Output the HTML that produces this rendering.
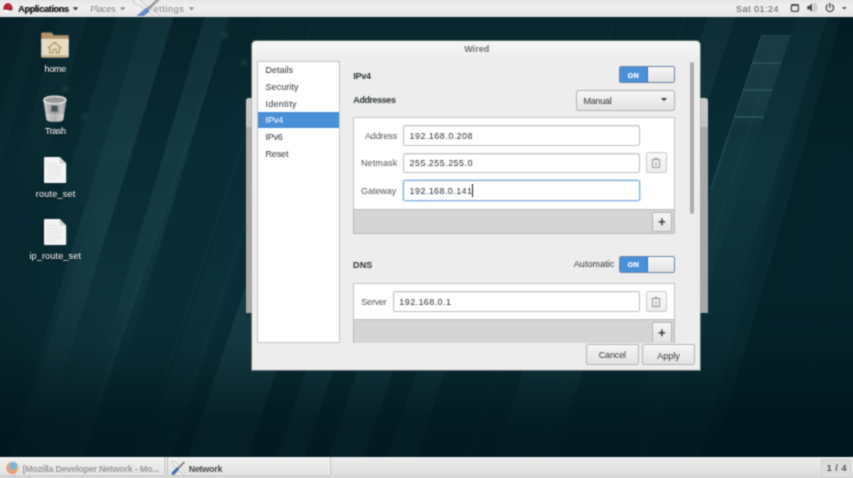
<!DOCTYPE html>
<html>
<head>
<meta charset="utf-8">
<title>Wired</title>
<style>
html,body{margin:0;padding:0;}html{background:#0b2930;}
#w{position:absolute;left:0;top:0;width:853px;height:478px;overflow:hidden;filter:url(#blr);}
body{width:853px;height:478px;overflow:hidden;position:relative;background:#0b2930;font-family:"Liberation Sans","DejaVu Sans",sans-serif;font-size:9px;color:#2e3436;}
.abs{position:absolute;}
.t{position:absolute;white-space:nowrap;line-height:12px;height:12px;}
.b{font-weight:bold;}
#bg{position:absolute;left:0;top:0;width:853px;height:478px;}
#top{position:absolute;left:0;top:0;width:853px;height:16.8px;background:linear-gradient(#e6e6e6,#efefef 35%,#ececec 65%,#e2e2e2);}
#bot{position:absolute;left:0;top:456.5px;width:853px;height:21.5px;background:linear-gradient(#f2f2f2,#ebebeb 2px,#e4e4e4 10px,#dcdcdc 19px,#d6d6d6 20px);}
.tb{position:absolute;top:457px;height:19.4px;border:1px solid #c2c2c2;border-top:none;border-radius:0 0 2px 2px;box-sizing:border-box;background:linear-gradient(rgba(255,255,255,.25),rgba(255,255,255,.12));box-shadow:inset -1px -1px 0 rgba(255,255,255,.5);}
#back{position:absolute;left:245.6px;top:97.6px;width:462px;height:215.4px;background:linear-gradient(#c9c9c9,#c3c3c3 29px,#a9a9a9 29.5px,#a7a7a7);border-radius:3px 3px 0 0;}
#dlg{position:absolute;left:252.4px;top:41.4px;width:448px;height:329px;background:linear-gradient(#f6f6f6,#ededed 20px);border-radius:4px 4px 0 0;box-shadow:0 0 0 1px rgba(160,160,160,.55);}
#side{position:absolute;left:257.2px;top:61px;width:83.2px;height:281.6px;background:#fff;border:1px solid #c4c4c4;box-sizing:border-box;}
#sel{position:absolute;left:258px;top:112px;width:81px;height:16px;background:#4a90d9;}
.box{position:absolute;background:#fff;border:1px solid #c4c4c4;box-sizing:border-box;}
.bar{position:absolute;background:#d5d5d5;border:1px solid #bdbdbd;box-sizing:border-box;}
.in{position:absolute;background:#fff;border:1px solid #bfbfbf;border-radius:2px;box-sizing:border-box;box-shadow:inset 0 1px 1px rgba(0,0,0,.08);}
.btn{position:absolute;border:1px solid #b4b4b4;border-radius:2px;box-sizing:border-box;background:linear-gradient(#f6f6f6,#e2e2e2);}
.sw{position:absolute;border:1px solid #6d84a8;border-radius:2px;box-sizing:border-box;background:linear-gradient(#f7f7f7,#e1e1e1);overflow:hidden;}
.sw i{position:absolute;left:0;top:0;bottom:0;width:27px;background:#4a90d9;border-right:1px solid #3b73b0;}
.ic{position:absolute;}
.lbl{color:#fff;text-shadow:0 1px 1px rgba(0,0,0,.8);}
</style>
</head>
<body>
<svg width="0" height="0" style="position:absolute"><filter id="blr" x="0" y="0" width="100%" height="100%" color-interpolation-filters="sRGB"><feConvolveMatrix order="3" kernelMatrix="1 2 1 2 7 2 1 2 1" divisor="19" edgeMode="duplicate" preserveAlpha="true"/></filter></svg>
<div id="w">
<svg id="bg" viewBox="0 0 853 478">
<defs>
<linearGradient id="d0" gradientUnits="userSpaceOnUse" x1="0" y1="16" x2="0" y2="260"><stop offset="0" stop-color="#00131a" stop-opacity="0.160"/><stop offset="1" stop-color="#00131a" stop-opacity="0"/></linearGradient>
<linearGradient id="d1" gradientUnits="userSpaceOnUse" x1="0" y1="16" x2="0" y2="220"><stop offset="0" stop-color="#00131a" stop-opacity="0.140"/><stop offset="1" stop-color="#00131a" stop-opacity="0"/></linearGradient>
<linearGradient id="d2" gradientUnits="userSpaceOnUse" x1="0" y1="16" x2="0" y2="200"><stop offset="0" stop-color="#00131a" stop-opacity="0.100"/><stop offset="1" stop-color="#00131a" stop-opacity="0"/></linearGradient>
<linearGradient id="s0" gradientUnits="userSpaceOnUse" x1="0" y1="16" x2="0" y2="300"><stop offset="0" stop-color="#aff" stop-opacity="0.030"/><stop offset="0.55" stop-color="#aff" stop-opacity="0.022"/><stop offset="1" stop-color="#aff" stop-opacity="0.000"/></linearGradient>
<linearGradient id="s1" gradientUnits="userSpaceOnUse" x1="0" y1="16" x2="0" y2="200"><stop offset="0" stop-color="#aff" stop-opacity="0.035"/><stop offset="0.55" stop-color="#aff" stop-opacity="0.026"/><stop offset="1" stop-color="#aff" stop-opacity="0.000"/></linearGradient>
<linearGradient id="s2" gradientUnits="userSpaceOnUse" x1="0" y1="16" x2="0" y2="260"><stop offset="0" stop-color="#aff" stop-opacity="0.040"/><stop offset="0.55" stop-color="#aff" stop-opacity="0.030"/><stop offset="1" stop-color="#aff" stop-opacity="0.000"/></linearGradient>
<linearGradient id="s3" gradientUnits="userSpaceOnUse" x1="0" y1="16" x2="0" y2="420"><stop offset="0" stop-color="#aff" stop-opacity="0.080"/><stop offset="0.55" stop-color="#aff" stop-opacity="0.060"/><stop offset="1" stop-color="#aff" stop-opacity="0.000"/></linearGradient>
<linearGradient id="s4" gradientUnits="userSpaceOnUse" x1="0" y1="16" x2="0" y2="380"><stop offset="0" stop-color="#aff" stop-opacity="0.070"/><stop offset="0.55" stop-color="#aff" stop-opacity="0.053"/><stop offset="1" stop-color="#aff" stop-opacity="0.000"/></linearGradient>
<linearGradient id="s5" gradientUnits="userSpaceOnUse" x1="0" y1="180" x2="0" y2="478"><stop offset="0" stop-color="#aff" stop-opacity="0.000"/><stop offset="0.45" stop-color="#aff" stop-opacity="0.030"/><stop offset="1" stop-color="#aff" stop-opacity="0.040"/></linearGradient>
<linearGradient id="s6" gradientUnits="userSpaceOnUse" x1="0" y1="180" x2="0" y2="478"><stop offset="0" stop-color="#aff" stop-opacity="0.000"/><stop offset="0.45" stop-color="#aff" stop-opacity="0.019"/><stop offset="1" stop-color="#aff" stop-opacity="0.025"/></linearGradient>
<linearGradient id="s7" gradientUnits="userSpaceOnUse" x1="0" y1="120" x2="0" y2="478"><stop offset="0" stop-color="#aff" stop-opacity="0.000"/><stop offset="0.45" stop-color="#aff" stop-opacity="0.064"/><stop offset="1" stop-color="#aff" stop-opacity="0.085"/></linearGradient>
<linearGradient id="s8" gradientUnits="userSpaceOnUse" x1="0" y1="250" x2="0" y2="478"><stop offset="0" stop-color="#aff" stop-opacity="0.000"/><stop offset="0.45" stop-color="#aff" stop-opacity="0.060"/><stop offset="1" stop-color="#aff" stop-opacity="0.080"/></linearGradient>
<linearGradient id="s9" gradientUnits="userSpaceOnUse" x1="0" y1="250" x2="0" y2="478"><stop offset="0" stop-color="#aff" stop-opacity="0.000"/><stop offset="0.45" stop-color="#aff" stop-opacity="0.060"/><stop offset="1" stop-color="#aff" stop-opacity="0.080"/></linearGradient>
<linearGradient id="s10" gradientUnits="userSpaceOnUse" x1="0" y1="250" x2="0" y2="478"><stop offset="0" stop-color="#aff" stop-opacity="0.000"/><stop offset="0.45" stop-color="#aff" stop-opacity="0.045"/><stop offset="1" stop-color="#aff" stop-opacity="0.060"/></linearGradient>
<linearGradient id="s11" gradientUnits="userSpaceOnUse" x1="0" y1="16" x2="0" y2="330"><stop offset="0" stop-color="#aff" stop-opacity="0.060"/><stop offset="0.55" stop-color="#aff" stop-opacity="0.045"/><stop offset="1" stop-color="#aff" stop-opacity="0.000"/></linearGradient>
<linearGradient id="s12" gradientUnits="userSpaceOnUse" x1="0" y1="36" x2="0" y2="440"><stop offset="0" stop-color="#aff" stop-opacity="0.050"/><stop offset="0.55" stop-color="#aff" stop-opacity="0.038"/><stop offset="1" stop-color="#aff" stop-opacity="0.000"/></linearGradient>
<linearGradient id="s13" gradientUnits="userSpaceOnUse" x1="0" y1="16" x2="0" y2="330"><stop offset="0" stop-color="#aff" stop-opacity="0.040"/><stop offset="0.55" stop-color="#aff" stop-opacity="0.030"/><stop offset="1" stop-color="#aff" stop-opacity="0.000"/></linearGradient>
<linearGradient id="s14" gradientUnits="userSpaceOnUse" x1="0" y1="230" x2="0" y2="478"><stop offset="0" stop-color="#aff" stop-opacity="0.000"/><stop offset="0.3" stop-color="#aff" stop-opacity="0.050"/><stop offset="0.6" stop-color="#aff" stop-opacity="0.050"/><stop offset="1" stop-color="#aff" stop-opacity="0.000"/></linearGradient>
<linearGradient id="shp" gradientUnits="userSpaceOnUse" x1="0" y1="35" x2="0" y2="130"><stop offset="0" stop-color="#9cc" stop-opacity=".12"/><stop offset=".7" stop-color="#9cc" stop-opacity=".07"/><stop offset="1" stop-color="#9cc" stop-opacity="0"/></linearGradient>
<linearGradient id="vg" x1="0" y1="0" x2="0" y2="1"><stop offset="0" stop-color="#00131a" stop-opacity=".3"/><stop offset=".12" stop-color="#00131a" stop-opacity=".22"/><stop offset=".32" stop-color="#00131a" stop-opacity="0"/><stop offset=".62" stop-color="#00131a" stop-opacity="0"/><stop offset=".72" stop-color="#00131a" stop-opacity=".13"/><stop offset=".88" stop-color="#00131a" stop-opacity=".7"/><stop offset="1" stop-color="#00131a" stop-opacity=".76"/></linearGradient>
<linearGradient id="hg" x1="0" y1="0" x2="1" y2="0"><stop offset="0" stop-color="#00131a" stop-opacity=".3"/><stop offset=".12" stop-color="#00131a" stop-opacity="0"/><stop offset="1" stop-color="#00131a" stop-opacity="0"/></linearGradient>
</defs>
<rect width="853" height="478" fill="#0a2d35"/>
<polygon points="174.0,16.0 205.0,16.0 131.8,260.0 100.8,260.0" fill="url(#d0)"/>
<polygon points="87.0,16.0 117.0,16.0 55.8,220.0 25.8,220.0" fill="url(#d1)"/>
<polygon points="229.0,16.0 262.0,16.0 206.8,200.0 173.8,200.0" fill="url(#d2)"/>
<polygon points="28.0,16.0 44.0,16.0 -38.4,300.0 -54.4,300.0" fill="url(#s0)"/>
<polygon points="60.0,16.0 87.0,16.0 33.6,200.0 6.6,200.0" fill="url(#s1)"/>
<polygon points="117.0,16.0 144.0,16.0 68.4,260.0 41.4,260.0" fill="url(#s2)"/>
<polygon points="144.0,16.0 174.0,16.0 48.8,420.0 18.8,420.0" fill="url(#s3)"/>
<polygon points="205.0,16.0 229.0,16.0 119.8,380.0 95.8,380.0" fill="url(#s4)"/>
<polygon points="103.1,180.0 176.1,180.0 76.2,478.0 3.2,478.0" fill="url(#s5)"/>
<polygon points="235.1,180.0 265.1,180.0 165.2,478.0 135.2,478.0" fill="url(#s6)"/>
<polygon points="301.2,120.0 360.2,120.0 240.2,478.0 181.2,478.0" fill="url(#s7)"/>
<polygon points="346.6,250.0 373.6,250.0 297.2,478.0 270.2,478.0" fill="url(#s8)"/>
<polygon points="397.6,250.0 433.6,250.0 357.2,478.0 321.2,478.0" fill="url(#s9)"/>
<polygon points="457.6,250.0 485.6,250.0 409.2,478.0 381.2,478.0" fill="url(#s10)"/>
<polygon points="708.0,16.0 736.0,16.0 632.4,330.0 604.4,330.0" fill="url(#s11)"/>
<polygon points="761.4,36.0 790.4,36.0 657.1,440.0 628.1,440.0" fill="url(#s12)"/>
<polygon points="797.0,16.0 828.0,16.0 724.4,330.0 693.4,330.0" fill="url(#s13)"/>
<polygon points="569.4,230.0 629.4,230.0 547.5,478.0 487.5,478.0" fill="url(#s14)"/>
<line x1="230.9" y1="16" x2="71.6" y2="478" stroke="#9fd" stroke-opacity=".055" stroke-width="1"/>
<line x1="285.3" y1="16" x2="131.0" y2="478" stroke="#9fd" stroke-opacity=".055" stroke-width="1"/>
<line x1="314.3" y1="16" x2="160.0" y2="478" stroke="#9fd" stroke-opacity=".055" stroke-width="1"/>
<line x1="615.5" y1="16" x2="463.1" y2="478" stroke="#9fd" stroke-opacity=".055" stroke-width="1"/>
<line x1="685.5" y1="16" x2="533.1" y2="478" stroke="#9fd" stroke-opacity=".055" stroke-width="1"/>
<line x1="865.5" y1="16" x2="713.1" y2="478" stroke="#9fd" stroke-opacity=".055" stroke-width="1"/>
<line x1="925.5" y1="16" x2="773.1" y2="478" stroke="#9fd" stroke-opacity=".055" stroke-width="1"/>
<line x1="785.5" y1="16" x2="633.1" y2="478" stroke="#9fd" stroke-opacity=".055" stroke-width="1"/>
<polygon points="761.5,35.6 790.5,35.6 759.3,130.0 730.3,130.0" fill="url(#shp)"/>
<polyline points="710.5,190.0 761.5,35.6 790.5,35.6" fill="none" stroke="#5a96a4" stroke-opacity=".35" stroke-width="1"/>
<line x1="752.5" y1="63" x2="781.5" y2="63" stroke="#5fa3b3" stroke-opacity=".5" stroke-width="1"/>
<line x1="743.5" y1="90" x2="772.5" y2="90" stroke="#5fa3b3" stroke-opacity=".5" stroke-width="1"/>
<line x1="734.6" y1="117" x2="763.6" y2="117" stroke="#5fa3b3" stroke-opacity=".5" stroke-width="1"/>
<rect width="853" height="478" fill="url(#vg)"/>
<rect width="853" height="478" fill="url(#hg)"/>
<polygon points="842.0,16 853,16 853,478 708.0,478" fill="#00131a" fill-opacity=".45"/>
<polygon points="828.0,16 842.0,16 708.0,478 694.0,478" fill="#00131a" fill-opacity=".12"/>
<circle cx="225.5" cy="35" r="4.6" fill="#cfe" fill-opacity=".04"/><circle cx="225.5" cy="35" r="1.1" fill="#cfe" fill-opacity=".13"/>
<circle cx="244" cy="62.7" r="4.6" fill="#cfe" fill-opacity=".04"/><circle cx="244" cy="62.7" r="1.1" fill="#cfe" fill-opacity=".13"/>
<circle cx="66" cy="89" r="4.6" fill="#cfe" fill-opacity=".04"/><circle cx="66" cy="89" r="1.1" fill="#cfe" fill-opacity=".13"/>
<circle cx="84.5" cy="116.5" r="4.6" fill="#cfe" fill-opacity=".04"/><circle cx="84.5" cy="116.5" r="1.1" fill="#cfe" fill-opacity=".13"/>
<circle cx="517" cy="158" r="4.6" fill="#cfe" fill-opacity=".04"/><circle cx="517" cy="158" r="1.1" fill="#cfe" fill-opacity=".13"/>
<circle cx="610" cy="330" r="4.6" fill="#cfe" fill-opacity=".04"/><circle cx="610" cy="330" r="1.1" fill="#cfe" fill-opacity=".13"/>
</svg>

<div id="top"></div>
<div id="bot"></div>

<div id="back"></div>
<div id="dlg"></div>
<div id="side"></div>
<div id="sel"></div>


<!-- top panel -->
<span class="t b" id="t_app" style="text-shadow:0 0 .4px #222;left:18.3px;top:3.3px;color:#1c2022;letter-spacing:-0.3px;">Applications</span>
<span class="t" id="t_pl" style="left:90.2px;top:3.3px;color:#828586;letter-spacing:-0.28px;">Places</span>
<span class="t" id="t_set" style="left:146.8px;top:3.3px;color:#828586;letter-spacing:0.64px;">Settings</span>
<span class="t" id="t_clk" style="left:736px;top:3.3px;color:#555;letter-spacing:0.5px;">Sat 01:24</span>

<!-- desktop labels -->
<span class="t lbl" id="l_home" style="left:44.5px;top:62.8px;letter-spacing:-0.27px;">home</span>
<span class="t lbl" id="l_trash" style="left:45.1px;top:124.9px;letter-spacing:-0.47px;">Trash</span>
<span class="t lbl" id="l_rs" style="left:35.7px;top:187.7px;letter-spacing:0.26px;">route_set</span>
<span class="t lbl" id="l_irs" style="left:29.4px;top:250.2px;letter-spacing:0.18px;">ip_route_set</span>

<!-- dialog -->
<span class="t b" id="d_title" style="left:464.2px;top:43.0px;color:#6e7173;letter-spacing:0.02px;">Wired</span>
<span class="t" id="s1" style="left:265.5px;top:63.8px;letter-spacing:-0.0px;">Details</span>
<span class="t" id="s2" style="left:265.5px;top:80.6px;letter-spacing:0.07px;">Security</span>
<span class="t" id="s3" style="left:265.5px;top:97.5px;letter-spacing:0.27px;">Identity</span>
<span class="t" id="s4" style="left:265.5px;top:114.3px;color:#fff;letter-spacing:-0.11px;">IPv4</span>
<span class="t" id="s5" style="left:265.5px;top:131.4px;letter-spacing:-0.24px;">IPv6</span>
<span class="t" id="s6" style="left:265.5px;top:147.7px;letter-spacing:-0.13px;">Reset</span>

<span class="t b" id="h1" style="left:353.3px;top:69.7px;letter-spacing:-0.24px;">IPv4</span>
<span class="t b" id="h2" style="left:353.3px;top:94.1px;letter-spacing:-0.42px;">Addresses</span>

<div class="sw" style="left:619px;top:66px;width:56px;height:17px;"><i></i></div>
<span class="t b" id="on1" style="left:627.4px;top:70.0px;color:#fff;font-size:6.8px;font-family:'DejaVu Sans',sans-serif;letter-spacing:0.03px;">ON</span>

<div class="btn" style="left:576px;top:90px;width:99px;height:21px;"></div>
<span class="t" id="c_man" style="left:583.6px;top:94.9px;letter-spacing:-0.27px;">Manual</span>
<div class="abs" style="left:661.4px;top:98.4px;width:0;height:0;border-left:3px solid transparent;border-right:3px solid transparent;border-top:3.2px solid #333;"></div>

<div class="box" style="left:353px;top:117px;width:322px;height:93px;border-bottom:none;"></div>
<div class="bar" style="left:353px;top:209px;width:322px;height:25px;"></div>

<span class="t" id="la" style="left:365px;top:129.7px;color:#555;letter-spacing:-0.14px;">Address</span>
<span class="t" id="ln" style="left:361px;top:157.0px;color:#555;letter-spacing:0.11px;">Netmask</span>
<span class="t" id="lg" style="left:361px;top:184.7px;color:#555;letter-spacing:-0.04px;">Gateway</span>
<div class="in" style="left:403px;top:125.2px;width:236.6px;height:20.6px;"></div>
<div class="in" style="left:403px;top:152.6px;width:236.6px;height:20.6px;"></div>
<div class="in" style="left:403px;top:180.3px;width:236.6px;height:20.7px;border-color:#7aade5;box-shadow:0 0 0 1px rgba(74,144,217,.22),inset 0 1px 1px rgba(0,0,0,.05);"></div>
<span class="t" id="va" style="left:409.6px;top:129.7px;letter-spacing:0.44px;">192.168.0.208</span>
<span class="t" id="vn" style="left:409.6px;top:157.0px;letter-spacing:0.44px;">255.255.255.0</span>
<span class="t" id="vg" style="left:409.6px;top:184.7px;letter-spacing:0.4px;">192.168.0.141</span>
<div class="abs" style="left:472px;top:184px;width:1px;height:13px;background:#222;"></div>

<div class="btn" style="left:646px;top:152.4px;width:21px;height:21px;border-color:#cbcbcb;background:linear-gradient(#f8f8f8,#ececec);"></div>
<div class="btn" style="left:652px;top:212px;width:20px;height:20px;"></div>
<svg class="ic" style="left:657px;top:217px;" width="10" height="10" viewBox="0 0 10 10"><path d="M4.9 1.6V8.2M1.6 4.9H8.2" stroke="#222" stroke-width="1.3" fill="none"/></svg>

<span class="t b" id="h3" style="left:353px;top:258.6px;letter-spacing:0.14px;">DNS</span>
<span class="t" id="aut" style="left:573.8px;top:257.8px;letter-spacing:0.07px;">Automatic</span>
<div class="sw" style="left:619px;top:256px;width:56px;height:17px;"><i></i></div>
<span class="t b" id="on2" style="left:627.4px;top:258.9px;color:#fff;font-size:6.8px;font-family:'DejaVu Sans',sans-serif;letter-spacing:0.03px;">ON</span>

<div class="box" style="left:353px;top:283px;width:322px;height:37px;border-bottom:none;"></div>
<div class="bar" style="left:353px;top:319px;width:322px;height:23.6px;border-bottom:none;"></div>
<span class="t" id="ls" style="left:361.3px;top:295.7px;color:#555;letter-spacing:-0.2px;">Server</span>
<div class="in" style="left:393.2px;top:290.8px;width:246.4px;height:20.8px;"></div>
<span class="t" id="vs" style="left:399.3px;top:295.7px;letter-spacing:0.41px;">192.168.0.1</span>
<div class="btn" style="left:646px;top:290.8px;width:21px;height:21px;border-color:#cbcbcb;background:linear-gradient(#f8f8f8,#ececec);"></div>
<div class="btn" style="left:652px;top:322px;width:20px;height:20px;border-bottom:none;border-radius:2px 2px 0 0;"></div>
<svg class="ic" style="left:657px;top:327.5px;" width="10" height="10" viewBox="0 0 10 10"><path d="M4.9 1.6V8.2M1.6 4.9H8.2" stroke="#222" stroke-width="1.3" fill="none"/></svg>

<div class="btn" style="left:586px;top:344px;width:53px;height:21px;"></div>
<span class="t" id="b_c" style="left:598.7px;top:349.0px;letter-spacing:-0.12px;">Cancel</span>
<div class="btn" style="left:642px;top:344px;width:53px;height:21px;"></div>
<span class="t" id="b_a" style="left:657.2px;top:349.5px;letter-spacing:-0.0px;">Apply</span>

<!-- scrollbar -->
<div class="abs" style="left:689.6px;top:62.2px;width:4px;height:152px;background:#acacac;border-radius:2px;"></div>

<!-- bottom panel -->
<div class="tb" style="left:-1px;width:165.6px;"></div>
<div class="tb" style="left:166.8px;width:164.2px;"></div>
<span class="t b" id="tk1" style="left:22.5px;top:462.8px;color:#9a9c9d;letter-spacing:-0.27px;">[Mozilla Developer Network - Mo...</span>
<span class="t b" id="tk2" style="left:188.7px;top:462.8px;color:#45494b;letter-spacing:-0.29px;">Network</span>
<div class="abs" style="left:821px;top:459px;width:30px;height:19px;background:#dcdcdc;border:1px solid #d0d0d0;box-sizing:border-box;"></div>
<span class="t b" id="ws" style="left:826.7px;top:462.4px;color:#555;letter-spacing:0.55px;">1 / 4</span>

<!-- icons -->
<svg class="ic" style="left:0;top:0;" width="853" height="16" viewBox="0 0 853 16">
 <!-- redhat -->
 <ellipse cx="7" cy="11" rx="3.4" ry="1.6" fill="#fff" opacity=".9"/>
 <path d="M3.7 9.6 C3.6 5.6 5.6 3.6 8 3.6 C10.6 3.6 12.4 5.8 12.3 9.6 C11 10.6 9.6 10.4 8.2 9.8 C6.6 9.1 5 9 3.7 9.6Z" fill="#a8192c" stroke="#7c1222" stroke-width=".5"/>
 <path d="M5 7.6 C5.2 5.4 6.6 4.4 8 4.4 C9.6 4.4 10.9 5.6 11.1 7.8 C9.4 8.4 6.6 8.3 5 7.6Z" fill="#c4283c"/>
 <!-- menu arrows -->
 <path d="M72.8 7.3h5.4l-2.7 3.1z" fill="#2e3436"/>
 <path d="M120 7.3h5.4l-2.7 3.1z" fill="#8b8e8f"/>
 <path d="M188.8 7.3h5.4l-2.7 3.1z" fill="#8b8e8f"/>
 <!-- dragged tools icon -->
 <g opacity=".9">
  <path d="M133 -2 L139 -2 L142 2.5 L159.5 15.5 L156.5 17.5 L140 5.5 L134.5 4Z" fill="#efefef" stroke="#bfbfbf" stroke-width=".9"/>
  <line x1="147" y1="10" x2="160" y2="-2" stroke="#909090" stroke-width="2.6"/>
  <line x1="148" y1="9.4" x2="138.6" y2="17.4" stroke="#5580c4" stroke-width="4.8"/>
 </g>
 <!-- window icon -->
 <rect x="791.4" y="4.9" width="7" height="6.4" rx="1" fill="#e8e8e8" stroke="#444" stroke-width="1.3"/>
 <rect x="791" y="4.2" width="7.8" height="1.6" rx=".6" fill="#444"/>
 <!-- speaker -->
 <path d="M807.2 6h2l2.8-2.6v8.4l-2.8-2.6h-2z" fill="#444"/>
 <path d="M813 4.2a4.4 4.4 0 0 1 0 6.8" fill="none" stroke="#aaa" stroke-width="1.1"/>
 <path d="M814.6 3a6 6 0 0 1 0 9.2" fill="none" stroke="#bbb" stroke-width="1.1"/>
 <!-- power -->
 <path d="M827.6 5a3.7 3.7 0 1 0 4.6 0" fill="none" stroke="#444" stroke-width="1.3" stroke-linecap="round"/>
 <line x1="829.9" y1="3.4" x2="829.9" y2="7.4" stroke="#444" stroke-width="1.3" stroke-linecap="round"/>
 <path d="M841.8 7h5l-2.5 2.6z" fill="#555"/>
</svg>

<!-- home folder -->
<svg class="ic" style="left:40px;top:31px;" width="30" height="28" viewBox="0 0 30 28">
 <path d="M1.2 2.6 Q1.2 1.6 2.2 1.6 H11 Q12 1.6 12.6 2.6 L13.6 4.2 H27.6 Q28.8 4.2 28.8 5.4 V12 H1.2Z" fill="#b0946a"/>
 <path d="M1.2 9 Q1.2 7.8 2.4 7.8 H27.6 Q28.8 7.8 28.8 9 V25 Q28.8 26.2 27.6 26.2 H2.4 Q1.2 26.2 1.2 25Z" fill="#e8dcc0"/>
 <path d="M1.2 24 H28.8 V25 Q28.8 26.4 27.6 26.4 H2.4 Q1.2 26.4 1.2 25Z" fill="#cdb88f"/>
 <path d="M7.6 17.2 L14.6 11.4 L21.6 17.2 M9.8 16 V21.8 H13 V18.4 H16.2 V21.8 H19.4 V16" fill="none" stroke="#ac9770" stroke-width="1.2"/>
</svg>

<!-- trash -->
<svg class="ic" style="left:42px;top:94px;" width="26" height="29" viewBox="0 0 26 29">
 <defs><linearGradient id="tg" x1="0" x2="1"><stop offset="0" stop-color="#d6d6d6"/><stop offset=".3" stop-color="#a6a6a6"/><stop offset=".55" stop-color="#989898"/><stop offset=".8" stop-color="#bdbdbd"/><stop offset="1" stop-color="#969696"/></linearGradient>
 <linearGradient id="tg2" x1="0" y1="0" x2="0" y2="1"><stop offset="0" stop-color="#fff" stop-opacity="0"/><stop offset=".6" stop-color="#fff" stop-opacity="0"/><stop offset=".68" stop-color="#fff" stop-opacity=".3"/><stop offset="1" stop-color="#fff" stop-opacity=".25"/></linearGradient></defs>
 <path d="M1.4 6 L4.4 25.4 Q4.8 27.8 12.9 27.8 Q21 27.8 21.4 25.4 L24.4 6Z" fill="url(#tg)"/>
 <path d="M1.4 6 L4.4 25.4 Q4.8 27.8 12.9 27.8 Q21 27.8 21.4 25.4 L24.4 6Z" fill="url(#tg2)"/>
 <ellipse cx="12.9" cy="6" rx="11" ry="3.8" fill="#9a9a9a" stroke="#e4e4e4" stroke-width="1.5"/>
 <rect x="9.4" y="11.8" width="6.3" height="5.8" fill="#46535a"/>
</svg>

<!-- file icons -->
<svg class="ic" style="left:43px;top:156px;" width="24" height="28" viewBox="0 0 24 28">
 <path d="M1 2 Q1 1 2 1 H16.6 L23.2 7.6 V26 Q23.2 27 22.2 27 H2 Q1 27 1 26Z" fill="#f3f3f3"/>
 <path d="M16.6 1 L23.2 7.6 H18 Q16.6 7.6 16.6 6.2Z" fill="#d4d4d4"/>
 <g stroke="#dcdcdc" stroke-width=".8"><line x1="4" y1="8" x2="14" y2="8"/><line x1="4" y1="11" x2="19" y2="11"/><line x1="4" y1="14" x2="19" y2="14"/><line x1="4" y1="17" x2="17" y2="17"/><line x1="4" y1="20" x2="19" y2="20"/><line x1="4" y1="23" x2="12" y2="23"/></g>
</svg>
<svg class="ic" style="left:43px;top:218px;" width="24" height="28" viewBox="0 0 24 28">
 <path d="M1 2 Q1 1 2 1 H16.6 L23.2 7.6 V26 Q23.2 27 22.2 27 H2 Q1 27 1 26Z" fill="#f3f3f3"/>
 <path d="M16.6 1 L23.2 7.6 H18 Q16.6 7.6 16.6 6.2Z" fill="#d4d4d4"/>
 <g stroke="#dcdcdc" stroke-width=".8"><line x1="4" y1="8" x2="14" y2="8"/><line x1="4" y1="11" x2="19" y2="11"/><line x1="4" y1="14" x2="19" y2="14"/><line x1="4" y1="17" x2="17" y2="17"/><line x1="4" y1="20" x2="19" y2="20"/><line x1="4" y1="23" x2="12" y2="23"/></g>
</svg>

<!-- delete glyphs -->
<svg class="ic" style="left:650px;top:157px;" width="12" height="12" viewBox="0 0 12 12">
 <path d="M1.4 2.7H10.6M4.4 2.5V1.4H7.6V2.5M2.5 3.4V10.6H9.5V3.4M6 5V9" fill="none" stroke="#979797" stroke-width="1"/>
</svg>
<svg class="ic" style="left:650px;top:296px;" width="12" height="12" viewBox="0 0 12 12">
 <path d="M1.4 2.7H10.6M4.4 2.5V1.4H7.6V2.5M2.5 3.4V10.6H9.5V3.4M6 5V9" fill="none" stroke="#979797" stroke-width="1"/>
</svg>

<!-- taskbar icons -->
<svg class="ic" style="left:0;top:457px;" width="200" height="21" viewBox="0 0 200 21">
 <g opacity=".8">
  <circle cx="12.5" cy="11" r="6.3" fill="#e9976f"/>
  <circle cx="13.3" cy="9.2" r="3.9" fill="#5aa7dd"/>
  <path d="M6.4 9.6 Q7.6 11.4 10 11 Q12.4 10.8 12.6 12.6 Q14 14.8 17 13.6 Q15.6 17.4 12.4 17.3 Q7 17 6.4 9.6Z" fill="#e88d63"/>
  <path d="M17.2 6.8 Q19.4 9.8 18.4 13 Q17.4 16 14.6 17 Q18 14 17.4 10.4 Q17.6 8.6 17.2 6.8Z" fill="#f5d68e"/>
 </g>
 <g>
  <line x1="173.4" y1="5.4" x2="183.4" y2="15.6" stroke="#bdbdbd" stroke-width="3.6" stroke-linecap="round"/>
  <line x1="173.4" y1="5.4" x2="183.4" y2="15.6" stroke="#f6f6f6" stroke-width="2.2" stroke-linecap="round"/>
  <line x1="176.6" y1="12.8" x2="184.4" y2="4.8" stroke="#777" stroke-width="1.7"/>
  <line x1="177.4" y1="12" x2="173.2" y2="16.4" stroke="#4468a8" stroke-width="3.2" stroke-linecap="round"/>
 </g>
</svg>

</div>
</body>
</html>
